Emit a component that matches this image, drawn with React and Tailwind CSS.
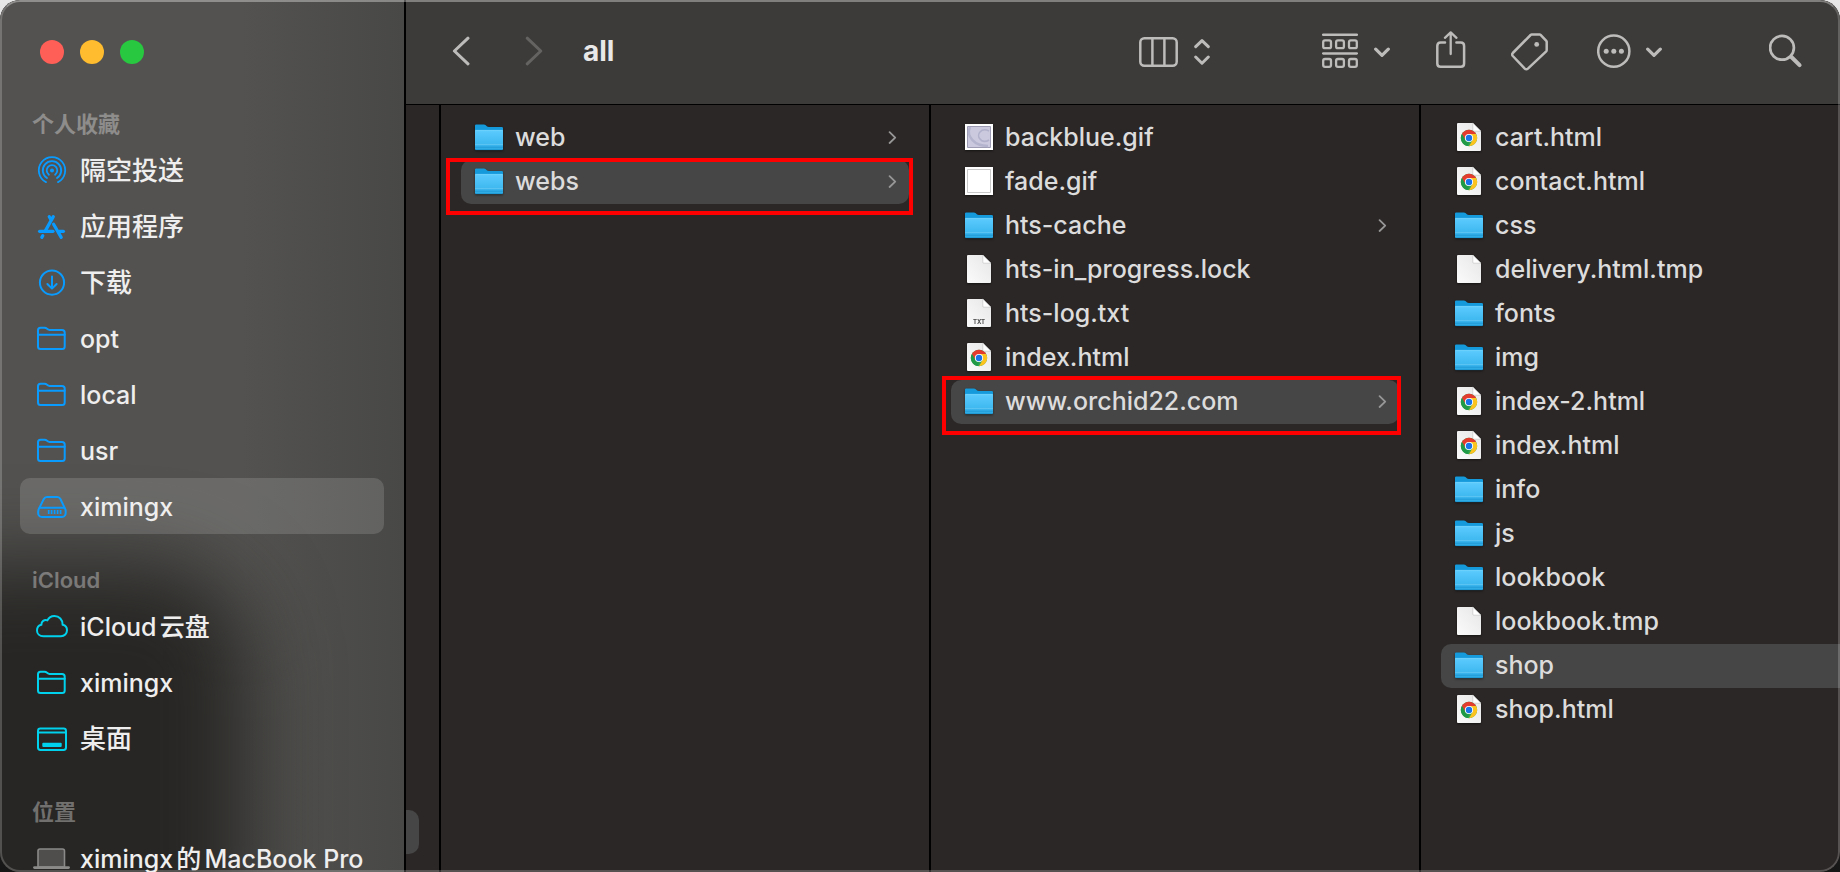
import clsx from 'clsx';

/* ---------- Sidebar icons (32 x 32) ---------- */

const SideSvg = ({ children }) => (
  <svg
    viewBox="0 0 32 32"
    className="w-8 h-8 shrink-0 overflow-visible"
    fill="none"
    stroke="currentColor"
    strokeWidth="2"
    strokeLinecap="round"
    strokeLinejoin="round"
    aria-hidden="true"
  >
    {children}
  </svg>
);

const AirDropIcon = () => (
  <SideSvg>
    <path d="M10 28.1A13.2 13.2 0 1 1 22 28.1" strokeWidth="1.8" />
    <path d="M11 24.1A9.2 9.2 0 1 1 21 24.1" strokeWidth="1.8" />
    <path d="M12.9 20.7A5.3 5.3 0 1 1 19.1 20.7" strokeWidth="1.8" />
    <circle cx="16" cy="16.4" r="2" fill="currentColor" stroke="none" />
  </SideSvg>
);

const AppsIcon = () => (
  <SideSvg>
    <g strokeWidth="3.2">
      <path d="M17.3 6.6 9.6 20.4" />
      <path d="M13.2 6.6 14.4 8.8" />
      <path d="M6.8 25.6 5.8 27.4" />
      <path d="M17.6 14.2 25.2 27.4" />
      <path d="M3.6 21.3H17" />
      <path d="M23 21.3H27.4" />
    </g>
  </SideSvg>
);

const DownloadsIcon = () => (
  <SideSvg>
    <circle cx="16" cy="16.6" r="12.1" />
    <path d="M16 10.6V22.4M11.4 18 16 22.6 20.6 18" />
  </SideSvg>
);

const FolderOutlineIcon = () => (
  <SideSvg>
    <path d="M2 8.2Q2 5.7 4.5 5.7H8.6Q9.8 5.7 10.8 6.6L11.4 7.1Q12.3 7.9 13.5 7.9H26Q28.7 7.9 28.7 10.5V24.5Q28.7 27 26.2 27H4.5Q2 27 2 24.5Z" />
    <path d="M2 12.7H28.7" />
  </SideSvg>
);

const DriveIcon = () => (
  <SideSvg>
    <path d="M2.5 19.6 7.8 9Q8.8 7 11 7H21.2Q23.4 7 24.4 9L29.5 19.6Q30.6 27 26 27H6Q1 27 2.5 19.6Z" />
    <path d="M3.6 17.8H28.4" />
    <path d="M12.7 20V24M15.6 20V24M18.6 20V24M21.6 20V24M24.6 20V24" strokeWidth="1.7" strokeLinecap="butt" />
  </SideSvg>
);

const CloudIcon = () => (
  <SideSvg>
    <path d="M7.4 26.2C3.6 26.2 1 23.6 1 20.4C1 17.6 2.8 15.4 5.4 14.8C5.2 11.4 8.4 9.2 11.4 10.4C12.8 7.6 15.4 6 18.4 6C23.2 6 26.8 9.6 26.6 14.8C29.2 15.4 31 17.6 31 20.2C31 23.6 28.4 26.2 25 26.2Z" />
  </SideSvg>
);

const DesktopIcon = () => (
  <SideSvg>
    <rect x="2" y="6.6" width="28" height="21.4" rx="2.4" />
    <path d="M2 10.6H30" />
    <rect x="6.3" y="20.7" width="19.4" height="4.2" rx="1" fill="currentColor" stroke="none" />
  </SideSvg>
);

const LaptopIcon = () => (
  <SideSvg>
    <path d="M2 25V9Q2 7 4 7H26.5Q28.5 7 28.5 9V25Z" fill="#4f4e4d" strokeWidth="1.6" />
    <path d="M-1.6 25.6H32.6" strokeWidth="2.6" />
  </SideSvg>
);

/* ---------- File icons (28 x 32) ---------- */

const FileSvg = ({ children }) => (
  <svg viewBox="0 0 28 32" className="w-7 h-8 shrink-0 drop-shadow-[0_1px_1px_rgba(0,0,0,0.5)]" aria-hidden="true">
    {children}
  </svg>
);

const FolderIcon = () => (
  <FileSvg>
    <path d="M0 3.6Q0 2.4 1.2 2.4H8.8Q10 2.4 10.8 3.2L11.8 4.2Q12.6 5 13.8 5H26.8Q28 5 28 6.2V12H0Z" fill="#159bdc" />
    <path d="M0 8.2H28V26.8Q28 28 26.8 28H1.2Q0 28 0 26.8Z" fill="url(#folderFront)" />
    <path d="M.4 8.4H27.6" stroke="#7bd8ff" strokeWidth=".8" />
    <path d="M0 22.4H28" stroke="#6fcbf5" strokeWidth=".7" />
    <path d="M0 25.2H28M.6 27.6H27.4" stroke="#1f97d2" strokeWidth=".9" />
  </FileSvg>
);

const Page = ({ children }) => (
  <FileSvg>
    <path d="M2 2Q2 1 3 1H17.8L26 9.2V28Q26 29 25 29H3Q2 29 2 28Z" fill="url(#paper)" />
    <path d="M17.8 1V8.2Q17.8 9.2 18.8 9.2H26Z" fill="#fff" stroke="#bdbdbd" strokeWidth=".6" />
    {children}
  </FileSvg>
);

const TextFileIcon = () => (
  <Page>
    <text x="14" y="26.4" textAnchor="middle" fontSize="6" fontWeight="700" fill="#4a4a4a">TXT</text>
  </Page>
);

const ChromeFileIcon = () => (
  <Page>
    <circle cx="14" cy="16" r="8.2" fill="#34a853" />
    <path d="M14 16 6.9 11.9A8.2 8.2 0 0 1 21.1 11.9Z" fill="#e33b2e" />
    <path d="M14 16 14 11.9H21.1A8.2 8.2 0 0 1 14 24.2L17.6 18Z" fill="#fcc31e" />
    <path d="M6.9 11.9 10.5 18 14 16 14 11.9Z" fill="#e33b2e" />
    <path d="M6.9 11.9 10.5 18A4 4 0 0 0 14 20L12.9 24.1A8.2 8.2 0 0 1 6.9 11.9Z" fill="#219a48" />
    <circle cx="14" cy="16" r="4.1" fill="#fff" />
    <circle cx="14" cy="16" r="3.2" fill="#1a73e8" />
  </Page>
);

const SwirlImageIcon = () => (
  <FileSvg>
    <path d="M0 2H28V28H0Z" fill="#fff" />
    <path d="M2.5 4.5H25.5V25.5H2.5Z" fill="#cac9de" stroke="#9d9cb4" />
    <path d="M5 5C1 14 9 24 23 24" fill="none" stroke="#b5b4ce" strokeWidth="2.4" />
    <path d="M24 9C16 5 11 13 15 17C17 20 21 20 24 18" fill="none" stroke="#b2b1cc" strokeWidth="1.6" />
  </FileSvg>
);

const BlankImageIcon = () => (
  <FileSvg>
    <path d="M0 1H28V29H0Z" fill="#fff" />
    <path d="M2.5 3.5H25.5V26.5H2.5Z" fill="#fff" stroke="#c9c9c9" />
  </FileSvg>
);

// Shared gradients for the file icons
const IconDefs = () => (
  <svg width="0" height="0" className="absolute" aria-hidden="true">
    <defs>
      <linearGradient id="folderFront" x1="0" y1="0" x2="0" y2="1">
        <stop offset="0" stopColor="#5dcbfe" />
        <stop offset=".65" stopColor="#40baf1" />
        <stop offset="1" stopColor="#2ca8e2" />
      </linearGradient>
      <linearGradient id="paper" x1="0" y1="1" x2="1" y2="0">
        <stop offset="0" stopColor="#fbfbfb" />
        <stop offset="1" stopColor="#e6e6e6" />
      </linearGradient>
    </defs>
  </svg>
);

const fileIcons = {
  folder: FolderIcon,
  page: Page,
  text: TextFileIcon,
  chrome: ChromeFileIcon,
  swirl: SwirlImageIcon,
  blank: BlankImageIcon,
};

/* ---------- Data ---------- */

const sections = [
  {
    title: '个人收藏',
    color: 'text-[#0a9bff]',
    items: [
      { name: '隔空投送', icon: AirDropIcon, cjk: true },
      { name: '应用程序', icon: AppsIcon, cjk: true },
      { name: '下载', icon: DownloadsIcon, cjk: true },
      { name: 'opt', icon: FolderOutlineIcon },
      { name: 'local', icon: FolderOutlineIcon },
      { name: 'usr', icon: FolderOutlineIcon },
      { name: 'ximingx', icon: DriveIcon, selected: true },
    ],
  },
  {
    title: 'iCloud',
    color: 'text-[#00d2ee]',
    items: [
      { name: 'iCloud云盘', icon: CloudIcon },
      { name: 'ximingx', icon: FolderOutlineIcon },
      { name: '桌面', icon: DesktopIcon, cjk: true },
    ],
  },
  {
    title: '位置',
    color: 'text-[#8b8a89]',
    items: [{ name: 'ximingx的MacBook Pro', icon: LaptopIcon }],
  },
];

const allFolder = [
  { name: 'web', type: 'folder', arrow: true },
  { name: 'webs', type: 'folder', arrow: true, selected: true, mark: '-top-0.5 -bottom-[11px] -left-[15px] -right-1' },
];

const websFolder = [
  { name: 'backblue.gif', type: 'swirl' },
  { name: 'fade.gif', type: 'blank' },
  { name: 'hts-cache', type: 'folder', arrow: true },
  { name: 'hts-in_progress.lock', type: 'page' },
  { name: 'hts-log.txt', type: 'text' },
  { name: 'index.html', type: 'chrome' },
  { name: 'www.orchid22.com', type: 'folder', arrow: true, selected: true, mark: '-top-1 -bottom-[11px] -left-[9px] -right-0.5' },
];

const siteFolder = [
  { name: 'cart.html', type: 'chrome' },
  { name: 'contact.html', type: 'chrome' },
  { name: 'css', type: 'folder' },
  { name: 'delivery.html.tmp', type: 'page' },
  { name: 'fonts', type: 'folder' },
  { name: 'img', type: 'folder' },
  { name: 'index-2.html', type: 'chrome' },
  { name: 'index.html', type: 'chrome' },
  { name: 'info', type: 'folder' },
  { name: 'js', type: 'folder' },
  { name: 'lookbook', type: 'folder' },
  { name: 'lookbook.tmp', type: 'page' },
  { name: 'shop', type: 'folder', selected: true },
  { name: 'shop.html', type: 'chrome' },
];

/* ---------- Sidebar ---------- */

const Sidebar = () => (
  <aside className="relative isolate w-[406px] shrink-0 overflow-hidden border-r-2 border-black bg-linear-to-r from-[#535250] from-60% to-[#484846]">
    {/* Dark wallpaper showing through the translucent panel */}
    <div className="absolute -z-10 -left-32 -bottom-32 w-[376px] h-[436px] rounded-[100px] bg-[#272624] blur-[42px]" />

    <div className="flex gap-4 px-10 pt-10">
      <button aria-label="Close" className="w-6 h-6 rounded-full bg-[#ff5f57]" />
      <button aria-label="Minimize" className="w-6 h-6 rounded-full bg-[#febc2e]" />
      <button aria-label="Zoom" className="w-6 h-6 rounded-full bg-[#28c840]" />
    </div>

    <nav className="mt-[42px] space-y-7">
      {sections.map((section) => (
        <section key={section.title}>
          <h2 className="h-9 px-8 text-[22px] leading-9 font-semibold text-white/35">{section.title}</h2>
          <ul>
            {section.items.map(({ name, icon: Icon, selected, cjk }) => (
              <li key={name} className="px-5">
                <button
                  className={clsx(
                    'flex items-center gap-3 w-full h-14 pl-4 rounded-[10px] whitespace-nowrap',
                    selected && 'bg-white/14'
                  )}
                >
                  <span className={section.color}>
                    <Icon />
                  </span>
                  <span
                    className={clsx(
                      'pt-0.5 leading-8 font-medium text-[#efeeee] [text-autospace:normal]',
                      cjk ? 'text-[26px]' : 'text-[25px]'
                    )}
                  >
                    {name}
                  </span>
                </button>
              </li>
            ))}
          </ul>
        </section>
      ))}
    </nav>
  </aside>
);

/* ---------- Toolbar ---------- */

const ToolSvg = ({ className, viewBox, children }) => (
  <svg
    viewBox={viewBox}
    className={clsx('h-11', className)}
    fill="none"
    stroke="currentColor"
    strokeWidth="2.5"
    strokeLinecap="round"
    strokeLinejoin="round"
    aria-hidden="true"
  >
    {children}
  </svg>
);

const DownChevron = () => (
  <ToolSvg className="w-4" viewBox="0 -2 16 44">
    <path d="M1.7 17.2 8 23.4 14.3 17.2" strokeWidth="3.2" />
  </ToolSvg>
);

const Toolbar = () => (
  <header className="flex items-center h-[105px] pl-[46px] pr-[37px] border-b border-black bg-[#3c3b39] text-[#bdbcbb]">
    <button aria-label="Back">
      <ToolSvg className="w-[18px]" viewBox="0 -2 18 44">
        <path d="M16 6.2 2.4 19 16 31.8" strokeWidth="3" />
      </ToolSvg>
    </button>
    <button aria-label="Forward" className="ml-[55px] text-[#646361]">
      <ToolSvg className="w-[18px]" viewBox="0 -2 18 44">
        <path d="M2.2 6.2 15.8 19 2.2 31.8" strokeWidth="3" />
      </ToolSvg>
    </button>
    <h1 className="ml-10 pb-0.5 text-[28px] leading-9 font-bold text-[#e9e8e8]">all</h1>

    <div className="flex items-center ml-auto">
      <button aria-label="View" className="flex gap-4">
        <ToolSvg className="w-10" viewBox="0 -2 40 44">
          <rect x="2.3" y="6.3" width="36.4" height="27.4" rx="4" />
          <path d="M14.4 6.3V33.7M26.4 6.3V33.7" />
        </ToolSvg>
        <ToolSvg className="w-4" viewBox="0 -2 16 44">
          <path d="M1.7 14.6 8 8.6 14.3 14.6M1.7 25 8 31.2 14.3 25" strokeWidth="3" />
        </ToolSvg>
      </button>
      <button aria-label="Group" className="flex gap-4 ml-28">
        <ToolSvg className="w-9" viewBox="0 -2 36 44">
          <path d="M1.2 2.7H34.8M1.2 21.4H34.8" />
          <g strokeWidth="2.3">
            <rect x="1.2" y="8.4" width="7.8" height="7.8" rx="1.8" />
            <rect x="14.1" y="8.4" width="7.8" height="7.8" rx="1.8" />
            <rect x="27" y="8.4" width="7.8" height="7.8" rx="1.8" />
            <rect x="1.2" y="27" width="7.8" height="7.8" rx="1.8" />
            <rect x="14.1" y="27" width="7.8" height="7.8" rx="1.8" />
            <rect x="27" y="27" width="7.8" height="7.8" rx="1.8" />
          </g>
        </ToolSvg>
        <DownChevron />
      </button>
      <button aria-label="Share" className="ml-[46px]">
        <ToolSvg className="w-[30px]" viewBox="0 -2 30 44">
          <path d="M9 10.6H4.6Q1.3 10.6 1.3 13.9V31.4Q1.3 34.7 4.6 34.7H24.8Q28.1 34.7 28.1 31.4V13.9Q28.1 10.6 24.8 10.6H20.4" />
          <path d="M14.7 22V.6M8.9 5.8 14.7.4 20.5 5.8" strokeWidth="2.3" />
        </ToolSvg>
      </button>
      <button aria-label="Tags" className="ml-[45px]">
        <ToolSvg className="w-[38px]" viewBox="0 -2 38 44">
          <path d="M20.8 2.4H28.6Q29.2 2.4 29.6 2.8L35.3 8.8Q35.7 9.2 35.7 9.8V18Q35.7 18.8 35.2 19.3L16.9 36.6Q15.3 38 13.8 36.6L1.8 24Q.5 22.4 1.8 21L19.6 3Q20.1 2.4 20.8 2.4Z" />
          <circle cx="25.7" cy="12.4" r="2.4" fill="currentColor" stroke="none" />
        </ToolSvg>
      </button>
      <button aria-label="More" className="flex gap-[15px] ml-12">
        <ToolSvg className="w-[34px]" viewBox="0 -2 34 44">
          <circle cx="16.8" cy="19.2" r="15.6" />
          <g fill="currentColor" stroke="none">
            <circle cx="9.2" cy="19.2" r="2.5" />
            <circle cx="16.8" cy="19.2" r="2.5" />
            <circle cx="24.4" cy="19.2" r="2.5" />
          </g>
        </ToolSvg>
        <DownChevron />
      </button>
      <button aria-label="Search" className="ml-[107px]">
        <ToolSvg className="w-[34px]" viewBox="0 -2 34 44">
          <circle cx="13" cy="15.8" r="11.9" strokeWidth="2.7" />
          <path d="M22.4 25 30.6 33.2" strokeWidth="4" />
        </ToolSvg>
      </button>
    </div>
  </header>
);

/* ---------- Columns ---------- */

const FileRow = ({ name, type, arrow, selected, mark, open }) => {
  const Icon = fileIcons[type];

  return (
    <li className={open ? 'pl-5' : 'px-5'}>
      <div className="relative">
        <button
          className={clsx(
            'flex items-center gap-3 w-full h-11 pl-3.5 pr-3 whitespace-nowrap',
            open ? 'rounded-l-[10px]' : 'rounded-[10px]',
            selected && 'bg-[#464646]'
          )}
        >
          <Icon />
          <span className="pb-0.5 text-[25px] leading-8 font-medium text-[#dddcdc]">{name}</span>
          {arrow && (
            <svg viewBox="0 0 9 14" className="w-[9px] h-3.5 ml-auto" fill="none" stroke="#989797" strokeWidth="1.8" strokeLinecap="round" strokeLinejoin="round" aria-hidden="true">
              <path d="M1.6 1.2 7.2 6.6 1.6 12" />
            </svg>
          )}
        </button>
        {/* Highlight frame */}
        {mark && <div className={clsx('absolute z-10 border-4 border-[#ff0000] pointer-events-none', mark)} />}
      </div>
    </li>
  );
};

const Column = ({ files, open }) => (
  <ul className={clsx('pt-[11px]', open ? 'flex-1 min-w-0 overflow-hidden' : 'w-[490px] shrink-0 border-r-2 border-black')}>
    {files.map((file) => (
      <FileRow key={file.name} open={open} {...file} />
    ))}
  </ul>
);

export default function App() {
  return (
    <div className="h-screen bg-linear-to-b from-[#e8e8e8] to-[#161616] font-['Inter','Noto_Sans_CJK_SC',sans-serif]">
      <IconDefs />
      <div className="relative flex h-full overflow-hidden rounded-[20px] bg-[#2b2726]">
        <Sidebar />
        <main className="flex flex-col flex-1 min-w-0">
          <Toolbar />
          <div className="flex flex-1 min-h-0">
            {/* Right edge of the parent column, scrolled mostly out of view */}
            <div className="flex flex-col justify-end w-[35px] shrink-0 pb-[18px] border-r-2 border-black">
              <div className="w-[13px] h-11 rounded-r-[10px] bg-[#464646]" />
            </div>
            <Column files={allFolder} />
            <Column files={websFolder} />
            <Column files={siteFolder} open />
          </div>
        </main>
        {/* Window edge */}
        <div className="absolute inset-0 z-20 rounded-[20px] border-2 border-white/20 border-t-white/35 pointer-events-none" />
      </div>
    </div>
  );
}
